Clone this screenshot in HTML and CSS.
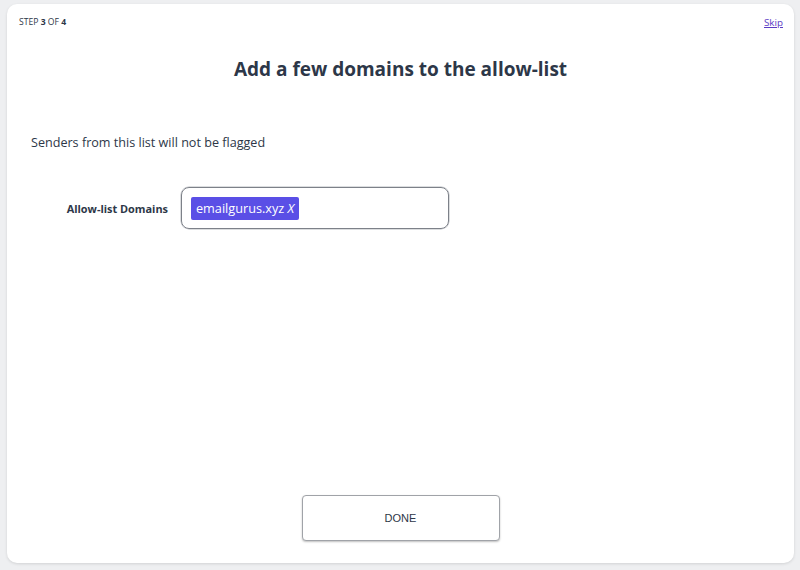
FILE: index.html
```html
<!DOCTYPE html>
<html>
<head>
<meta charset="utf-8">
<link rel="stylesheet" href="styles.css">
</head>
<body>
<div class="card">
  <div class="topbar">
    <div class="step">STEP <b>3</b> OF <b>4</b></div>
    <a class="skip" href="#">Skip</a>
  </div>
  <h1 class="title">Add a few domains to the allow-list</h1>
  <p class="desc">Senders from this list will not be flagged</p>
  <div class="field">
    <label class="label">Allow-list Domains</label>
    <div class="input">
      <span class="tag">emailgurus.xyz <i>X</i></span>
    </div>
  </div>
  <div class="spacer"></div>
  <div class="actions">
    <button class="done">DONE</button>
  </div>
</div>
</body>
</html>
```
FILE: styles.css
```css
html, body {
  margin: 0;
  padding: 0;
}
body {
  background: #eeeff1;
  padding: 4px 6px 7px 7px;
  box-sizing: border-box;
  height: 570px;
  font-family: "Open Sans", "Liberation Sans", sans-serif;
  color: #2d3748;
}
.card {
  background: #fff;
  border-radius: 10px;
  height: 559px;
  box-shadow: 0 1px 3px rgba(0,0,0,0.12);
  display: flex;
  flex-direction: column;
  box-sizing: border-box;
  padding: 12px 12px 22px 12px;
}
.topbar {
  display: flex;
  justify-content: space-between;
  align-items: center;
  height: 12px;
}
.step {
  font-size: 8.6px;
  color: #2d3748;
}
.step b { font-weight: 700; }
.skip {
  font-size: 9.8px;
  color: #5b3cc4;
  text-decoration: underline;
  margin-right: -1px;
}
.title {
  margin: 27px 0 0 0;
  text-align: center;
  font-size: 19px;
  font-weight: 700;
  line-height: 28px;
  color: #2d3748;
}
.desc {
  margin: 50px 0 0 12px;
  font-size: 12.6px;
  line-height: 20px;
}
.field {
  display: flex;
  align-items: center;
  margin-top: 34px;
}
.label {
  width: 149px;
  text-align: right;
  font-size: 10.9px;
  font-weight: 700;
  margin-right: 13px;
}
.input {
  width: 268px;
  height: 42px;
  box-sizing: border-box;
  border: 1px solid #7d8189;
  border-radius: 8px;
  display: flex;
  align-items: center;
  padding-left: 9px;
  box-shadow: 0 0 0 0.5px #b8bbc0;
}
.tag {
  background: #5a4fe6;
  color: #fff;
  font-size: 12.7px;
  line-height: 23px;
  padding: 0 5px;
  border-radius: 2px;
}
.tag i { font-style: italic; }
.spacer { flex: 1; }
.actions {
  display: flex;
  justify-content: center;
}
.done {
  width: 198px;
  height: 46px;
  background: #fff;
  border: 1px solid #a0a3a8;
  border-radius: 4px;
  box-shadow: 0 1px 2px rgba(0,0,0,0.25);
  font-family: "Liberation Sans", Arial, sans-serif;
  font-size: 11px;
  color: #2d3748;
}
```
